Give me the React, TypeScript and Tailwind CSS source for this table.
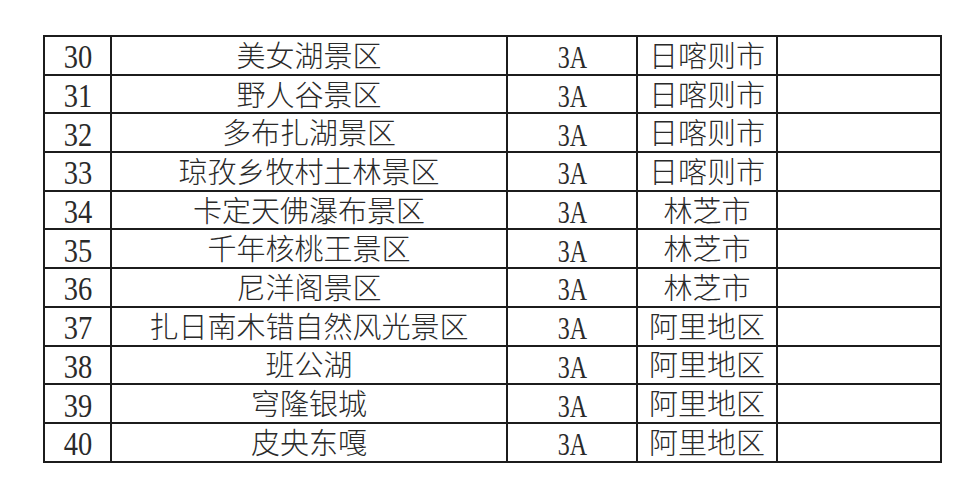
const rows: [string, string, string][] = [
  ['30', '美女湖景区', '日喀则市'],
  ['31', '野人谷景区', '日喀则市'],
  ['32', '多布扎湖景区', '日喀则市'],
  ['33', '琼孜乡牧村土林景区', '日喀则市'],
  ['34', '卡定天佛瀑布景区', '林芝市'],
  ['35', '千年核桃王景区', '林芝市'],
  ['36', '尼洋阁景区', '林芝市'],
  ['37', '扎日南木错自然风光景区', '阿里地区'],
  ['38', '班公湖', '阿里地区'],
  ['39', '穹隆银城', '阿里地区'],
  ['40', '皮央东嘎', '阿里地区'],
]

const cell = 'flex items-center justify-center border-r-2 border-b-2 border-[#1c1c1c] h-[38.7px] pt-[4px]'

export default function App() {
  return (
    <div
      className="w-[979px] h-[503px] bg-white pt-[35px] pl-[43px] text-[#2a2a2a]"
      style={{ fontFamily: '"Liberation Serif", "Noto Sans CJK SC", serif' }}
    >
      <div className="inline-grid grid-cols-[67px_396px_130px_140px_164px] border-l-2 border-t-2 border-[#1c1c1c]">
        {rows.map(([no, name, city]) => (
          <div key={no} className="contents">
            <div className={`${cell} text-[30px] leading-none`}>
              <span className="inline-block scale-x-95 scale-y-[1.12]">{no}</span>
            </div>
            <div className={`${cell} text-[29px] leading-none font-light`}>{name}</div>
            <div className={`${cell} text-[30px] leading-none`}>
              <span className="inline-block scale-x-[0.8] scale-y-[1.08]">3A</span>
            </div>
            <div className={`${cell} text-[29px] leading-none font-light`}>{city}</div>
            <div className={cell} />
          </div>
        ))}
      </div>
    </div>
  )
}
